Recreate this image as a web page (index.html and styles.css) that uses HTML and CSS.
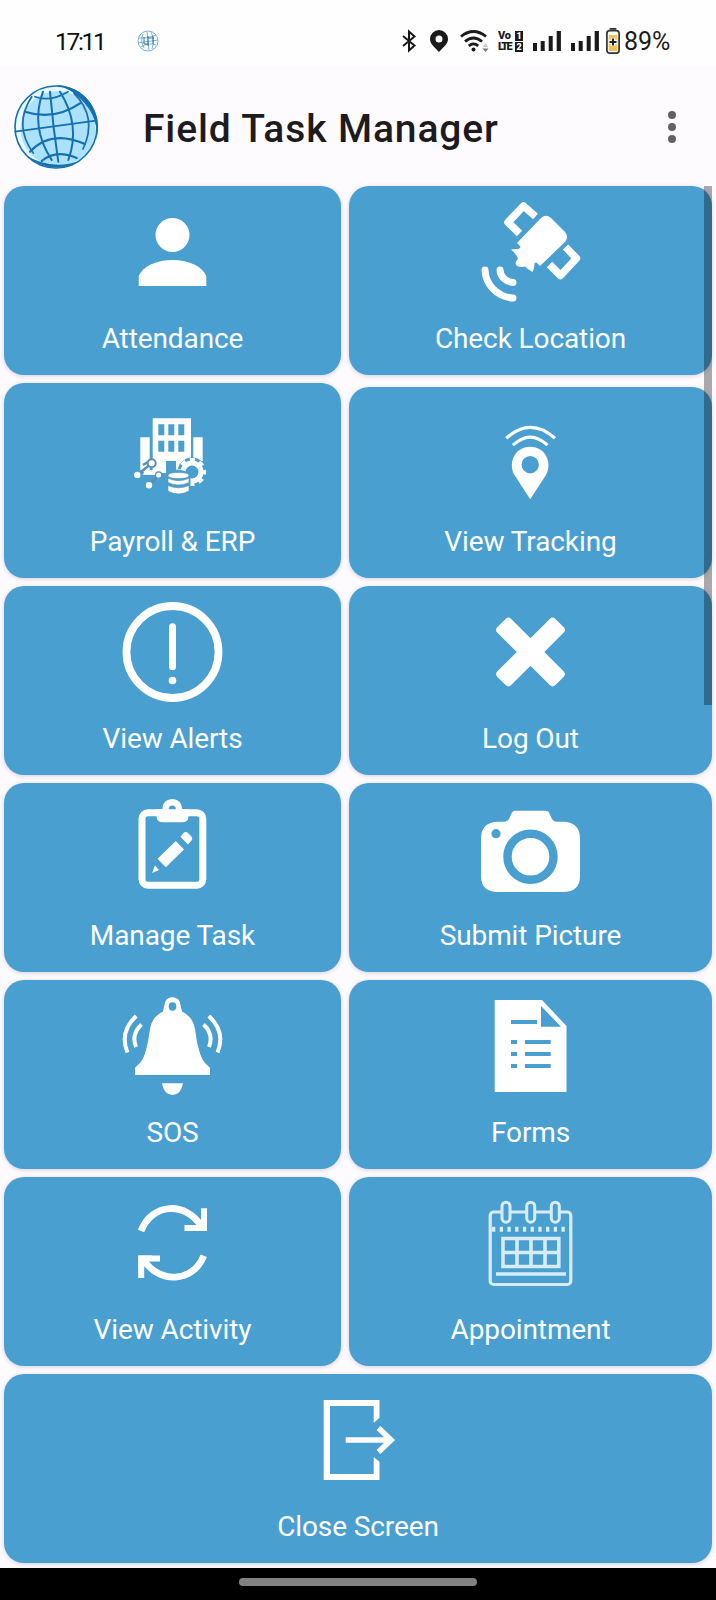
FILE: index.html
```html
<!DOCTYPE html>
<html lang="en">
<head>
  <meta charset="UTF-8" />
  <meta name="viewport" content="width=device-width, initial-scale=1.0"/>
  <title>Field Task Manager</title>
  <link rel="stylesheet" href="styles.css">
</head>
<body>

  <div class="status-bar">
    <span class="clock">17:11</span>
    <svg class="mini-globe" viewBox="0 0 22 22">
      <circle cx="11" cy="11" r="10" />
      <path d="M2 8 Q10 9 19 5 M1 13 L21 10 M4 17 Q11 12 19 15 M6 4 Q3 11 7 18 M10 2 L12 20 M14 2 Q18 10 15 19" />
      <path class="dark" d="M7 7 V14 H11 M11 6 V16 M11 8 H17 M16 6 V14" />
    </svg>
    <div class="status-icons">
      <svg class="bluetooth" viewBox="0 0 14 22"><path d="M1 6 L12.500 15.500 L7 20.500 V1.500 L12.500 6.500 L1 16" /></svg>
      <svg class="place" viewBox="0 0 18 22"><path fill-rule="evenodd" d="M9 0 A9 9 0 0 1 18 9 C18 14 13.500 17 9 22 C4.500 17 0 14 0 9 A9 9 0 0 1 9 0Z M9 5.500 A3.500 3.500 0 1 0 9 12.500 A3.500 3.500 0 1 0 9 5.500Z" /></svg>
      <svg class="wifi" viewBox="0 0 29 22">
        <path class="arc" d="M1 6.500 Q13.500 -3.500 26 6.500 M5 11.500 Q13.500 4.500 22 11.500 M8.800 15.800 Q13.500 12 18.200 15.800" />
        <circle cx="13.500" cy="19.500" r="2" />
        <path class="up" d="M22.500 17 L25.500 13 L28.500 17Z" />
        <path class="down" d="M22.500 18.500 H28.500 L25.500 22Z" />
      </svg>
      <div class="volte">
        <span class="vo">Vo</span><b>1</b>
        <span>LTE</span><b>2</b>
      </div>
      <svg class="signal" viewBox="0 0 28 20"><path d="M0 12 H4 V20 H0Z M7.700 10 H11.700 V20 H7.700Z M15.700 5 H19.700 V20 H15.700Z M23.700 0 H27.900 V20 H23.700Z" /></svg>
      <svg class="signal" viewBox="0 0 28 20"><path d="M0 12 H4 V20 H0Z M7.700 10 H11.700 V20 H7.700Z M15.700 5 H19.700 V20 H15.700Z M23.700 0 H27.900 V20 H23.700Z" /></svg>
      <svg class="battery" viewBox="0 0 14 26">
        <rect x="3.500" y="0" width="7" height="1.800" rx=".8" fill="#333" />
        <rect x=".9" y="2.600" width="12.200" height="22.500" rx="2.800" fill="#fff" stroke="#333" stroke-width="1.700" />
        <rect x="2.700" y="7" width="8.600" height="16" rx="1" fill="#f6c251" />
        <path d="M7 10 V18 M3.200 14 H10.800" fill="none" stroke="#fff" stroke-width="4.500" />
        <path d="M7 10.500 V17.500 M3.500 14 H10.500" fill="none" stroke="#222" stroke-width="2" />
      </svg>
      <span class="percent">89%</span>
    </div>
  </div>

  <div class="app-bar">
    <svg class="logo" viewBox="0 0 84 84">
      <circle cx="42" cy="42" r="41" fill="#e8f9ff" />
      <circle cx="44" cy="43.500" r="37.500" fill="#abe1fa" />
      <circle cx="42" cy="42" r="41" fill="none" stroke="#1470ae" stroke-width="1.600" />
      <path fill="#1470ae" d="M42 0 A42 42 0 0 1 82 55 Q86 28 59 7.500 Q52 2.500 42 0Z M10 69 Q36 92 66 76 Q36 86 10 69Z" />
      <g fill="none" stroke="#1470ae" stroke-width="1.700" stroke-linecap="round">
        <path d="M21 11.700 Q36 17.500 54 6.700 M1 46.700 L82 35.700" />
        <path stroke-width="2.200" d="M11 26.700 Q40 36 66 18.300 M16 66.700 Q37 44 71 59 M27.700 76 Q42 64 62.700 73" />
        <path stroke-width="2" d="M36 6.700 Q39 42 44.300 76.700 M29 6.700 Q16 42 37.700 75 M46 6.700 Q67 40 54.300 75" />
        <path d="M17.700 11.700 Q-1 40 19.300 68 M60 8.300 Q84 32 69 64" />
      </g>
    </svg>
    <h1>Field Task Manager</h1>
    <svg class="more" viewBox="0 0 8 32"><circle cx="4" cy="4" r="4" /><circle cx="4" cy="16" r="4" /><circle cx="4" cy="28" r="4" /></svg>
  </div>

  <div class="menu">
    <div class="card">
      <svg class="icon" viewBox="0 0 100 100">
        <circle cx="49.500" cy="33" r="17" />
        <path d="M15.700 84 V74 C20 64 34 58 49.500 58 S79 64 83.300 74 V84Z" />
      </svg>
      <span>Attendance</span>
    </div>

    <div class="card">
      <svg class="icon" viewBox="0 0 100 100">
        <path d="M36 41 L60 16 Q65 11.500 70 16 L84 30 Q88 35 84 40 L59 64Z" />
        <path d="M30 47.500 Q36 46.500 42 48 L53 58.500 Q54.500 64 51.500 70 L46 66.500 L44 64.500 Q39 66 35.500 63.500 Q33 60 37 57 Q35 51 30 47.500Z" />
        <path d="M36 50 L40 44 L56 60 L50 63Z" />
        <g class="line" stroke-width="7.500">
          <path stroke-linejoin="round" d="M38.500 31.500 L27 20.300 L42.500 4 L54.500 14.500" />
          <path stroke-linejoin="round" d="M84.500 45 L95.500 56.300 L79.500 73.500 L68.500 62.500" />
          <path stroke-width="7" stroke-linecap="round" d="M4 68 A30 29 0 0 0 32 96 M19 68 A14 13 0 0 0 32 80.500" />
        </g>
      </svg>
      <span>Check Location</span>
    </div>

    <div class="card tall">
      <svg class="icon" viewBox="0 0 100 100">
        <path fill-rule="evenodd" d="M29.700 13.300 H68 V68 H53 V56 H43 V68 H29.700Z M35.300 19.300 V30.300 H41.300 V19.300Z M45.300 19.300 V30.300 H51.300 V19.300Z M55.300 19.300 V30.300 H61.300 V19.300Z M35.300 35.700 V46.700 H41.300 V35.700Z M45.300 35.700 V46.700 H51.300 V35.700Z M55.300 35.700 V46.700 H61.300 V35.700Z" />
        <path d="M17.300 32.300 H26.700 V68 H22 L17.300 65Z M70.300 32.300 H79.700 V56 H70.300Z M22 65 H36 V70 H20Z" />
        <g fill="none" stroke="#5b8fae" stroke-width="2.600">
          <path d="M14.300 70 L28.700 58.300 M26 80 L35.700 70 M20 60 L25 57" />
        </g>
        <circle cx="28.700" cy="58.300" r="4" stroke="#5b8fae" stroke-width="2" />
        <circle cx="35.700" cy="70" r="3.200" stroke="#5b8fae" stroke-width="1.300" />
        <circle cx="14.300" cy="70" r="3.200" />
        <circle cx="26" cy="80.200" r="3.200" />
        <circle cx="69" cy="67" r="14.500" fill="#499fcf" />
        <circle class="line" cx="69" cy="67" r="9" stroke-width="5" />
        <circle class="line" cx="69" cy="67" r="12.300" stroke-width="3.600" stroke-dasharray="5 4.660" stroke-dashoffset="2.500" />
        <path fill="#499fcf" d="M43 68 Q55 61 67.500 69 V90 H43Z" />
        <path stroke="#5b8fae" stroke-width=".6" d="M45 70.500 Q45 67.500 55.500 67.500 T66 70.500 T55.500 73.500 T45 70.500Z M45 73.300 Q55.500 78 66 73.300 V77.500 Q55.500 82.500 45 77.500Z M45 80.500 Q55.500 85 66 80.500 V86 Q55.500 92 45 86Z" />
      </svg>
      <span>Payroll &amp; ERP</span>
    </div>

    <div class="card lowered">
      <svg class="icon" viewBox="0 0 100 100">
        <path fill-rule="evenodd" d="M49.200 94.300 L33.500 70 C27 59 33 41.700 49.200 41.700 S71.500 59 65 70Z M49.200 51 A8.700 8.700 0 1 0 49.200 68.400 A8.700 8.700 0 1 0 49.200 51Z" />
        <path class="line" stroke-width="3.200" d="M25.200 33.300 Q49.200 11.500 74 33.300 M32 40.200 Q49.200 24 66.500 40.200" />
      </svg>
      <span>View Tracking</span>
    </div>

    <div class="card">
      <svg class="icon" viewBox="0 0 100 100">
        <circle class="line" cx="49.500" cy="50" r="46" stroke-width="7.800" />
        <rect x="46" y="21.300" width="7" height="47" rx="3.500" />
        <circle cx="49.500" cy="78.500" r="3.800" />
      </svg>
      <span>View Alerts</span>
    </div>

    <div class="card">
      <svg class="icon" viewBox="0 0 100 100">
        <rect x="8.500" y="40.200" width="82" height="19.600" rx="4" transform="rotate(45 49.500 50)" />
        <rect x="8.500" y="40.200" width="82" height="19.600" rx="4" transform="rotate(-45 49.500 50)" />
      </svg>
      <span>Log Out</span>
    </div>

    <div class="card">
      <svg class="icon" viewBox="0 0 100 100">
        <rect class="line" x="19" y="13.700" width="60.800" height="72.500" rx="6" stroke-width="7" />
        <path fill-rule="evenodd" d="M33.500 10 H39.500 C39 -3.500 59.500 -3.500 59 10 H65.500 V17 Q65.500 23.300 59 23.300 H40 Q33.500 23.300 33.500 17Z M49.300 6.600 A3.600 3.600 0 1 0 49.300 13.800 A3.600 3.600 0 1 0 49.300 6.600Z" />
        <path d="M52.800 42 L61 50.500 L42.800 68.300 L34.500 59.700Z M57.400 37.700 L60.500 34 Q63 32 65.500 34.500 L68 37 Q70.500 40 68 42 L65 45.500Z M32 66.500 L36 71 L29 74Z" />
      </svg>
      <span>Manage Task</span>
    </div>

    <div class="card">
      <svg class="icon" viewBox="0 0 100 100">
        <path d="M17 22.700 H23 Q27 22.700 28.500 19 L31 13.500 Q32 11.700 34 11.700 H65 Q67 11.700 68 13.500 L70.500 19 Q72 22.700 76 22.700 H82 Q99 23 99 40 V77 Q99 93 82 93 H17 Q0 93 0 77 V40 Q0 23 17 22.700Z" />
        <circle cx="49.500" cy="57.700" r="23" fill="none" stroke="#499fcf" stroke-width="8.400" />
        <circle cx="15" cy="34.700" r="4.600" fill="#499fcf" />
      </svg>
      <span>Submit Picture</span>
    </div>

    <div class="card">
      <svg class="icon" viewBox="0 0 100 100">
        <path fill-rule="evenodd" d="M49.500 1.300 C55 1.300 57 5 57.500 9 L59 15.500 C66 19 70 24 71.500 31 C73 37 73 42 75 50 C78 62 80 66 87 71.700 V79 H12 V71.700 C19 66 21 62 24 50 C26 42 26 37 27.500 31 C29 24 33 19 40 15.500 L41.500 9 C42 5 44 1.300 49.500 1.300Z M49.500 6.300 A3.800 4.200 0 1 0 49.500 14.700 A3.800 4.200 0 1 0 49.500 6.300Z" />
        <path d="M39 87.300 H60 Q58 99 49.500 99 T39 87.300Z" />
        <path class="line" stroke-width="4" d="M13.200 20 Q-4 36 4.500 56.500 M18.500 28.500 Q8 38 13 51 M85.800 20 Q103 36 94.500 56.500 M80.500 28.500 Q91 38 86 51" />
      </svg>
      <span>SOS</span>
    </div>

    <div class="card">
      <svg class="icon" viewBox="0 0 100 100">
        <path d="M13.700 4 H61 L85.500 30 V96 H13.700Z" />
        <path fill="#499fcf" d="M60 10 V30.700 H80Z M30 24 H56 V28 H30Z M30 44 H36 V48 H30Z M44 44 H69.700 V48 H44Z M30 56 H36 V60 H30Z M44 56 H69.700 V60 H44Z M30 68 H36 V72 H30Z M44 68 H69.700 V72 H44Z" />
      </svg>
      <span>Forms</span>
    </div>

    <div class="card">
      <svg class="icon" viewBox="0 0 100 100">
        <g class="line" stroke-width="6.800">
          <path d="M18 38 C29 9.500 63 8 79 34 M80.800 62.700 C70 90 36 91.500 20 66" />
          <path stroke-width="6" d="M61.500 35 H81 V15.300 M37 65.500 H18.200 V85" />
        </g>
        <path d="M70 38 L84 22 V38Z M29 62.500 L15.500 78 V62.500Z" />
      </svg>
      <span>View Activity</span>
    </div>

    <div class="card">
      <svg class="icon calendar" viewBox="0 0 100 100">
        <rect x="9.200" y="19" width="80.600" height="72.500" rx="3.500" stroke-width="3.200" />
        <g fill="#499fcf" stroke-width="3">
          <rect x="21" y="9.200" width="8" height="20" rx="4" />
          <rect x="45.700" y="9.200" width="8" height="20" rx="4" />
          <rect x="70.300" y="9.200" width="8" height="20" rx="4" />
        </g>
        <path stroke-width="5" stroke-dasharray="3.300 4.420" d="M11 36.300 H89.500" />
        <path stroke-width="3.600" d="M22 45.500 H77.800 V73.500 H22Z M22 59.500 H77.800 M36 45.500 V73.500 M50 45.500 V73.500 M64 45.500 V73.500 M15 81 H85" />
      </svg>
      <span>Appointment</span>
    </div>

    <div class="card wide">
      <svg class="icon" viewBox="0 0 100 100">
        <path d="M15.700 10 H71.500 V27.700 L65.700 33 V16 H22 V84 H65.700 V67 L71.500 71.700 V90 H15.700Z" />
        <path class="line" stroke-width="5.600" d="M37.700 50 H83 M70.500 38 L83 50 L70.500 62" />
      </svg>
      <span>Close Screen</span>
    </div>

    <div class="scrollbar"></div>
  </div>

  <div class="nav-bar"><div class="nav-handle"></div></div>

</body>
</html>
```

FILE: styles.css
```css
:root {
  --bg: #fefbff;
  --card: #499fcf;
  --text: #1d1b20;
}
* {
  box-sizing: border-box;
}
body {
  margin: 0;
  width: 716px;
  height: 1600px;
  overflow: hidden;
  font-family: Roboto, "Liberation Sans", sans-serif;
  background: var(--bg);
  color: var(--text);
  display: flex;
  flex-direction: column;
}
svg {
  display: block;
  flex: none;
  overflow: visible;
}

/* status bar */
.status-bar {
  height: 66px;
  padding: 16px 42px 0 55px;
  display: flex;
  align-items: center;
  background: #fefefe;
}
.clock {
  width: 82px;
  padding-top: 1px;
  font-size: 24.5px;
  letter-spacing: -2.3px;
  line-height: 50px;
  color: #111;
}
.mini-globe {
  width: 22px;
  height: 22px;
  fill: none;
  stroke: #5ba3cc;
  stroke-width: 0.8;
}
.mini-globe .dark {
  stroke: #155f86;
}
.status-icons {
  margin-left: auto;
  display: flex;
  align-items: center;
  fill: #1a1a1a;
}
.bluetooth {
  width: 14px;
  height: 22px;
  fill: none;
  stroke: #1a1a1a;
  stroke-width: 2;
}
.place {
  width: 18px;
  height: 22px;
  margin-left: 14px;
}
.wifi {
  width: 29px;
  height: 22px;
  margin-left: 12px;
}
.wifi .arc {
  fill: none;
  stroke: #1a1a1a;
  stroke-width: 2.8;
}
.wifi .up {
  fill: #ccc;
}
.wifi .down {
  fill: #777;
}
.volte {
  width: 25px;
  height: 21px;
  margin-left: 9px;
  display: grid;
  grid-template-columns: 16px 8px;
  grid-template-rows: 10px 10px;
  gap: 1px;
  font-size: 11px;
  line-height: 10px;
  font-weight: 900;
  color: #1a1a1a;
}
.volte span {
  letter-spacing: -1.6px;
}
.volte .vo {
  letter-spacing: -0.2px;
}
.volte b {
  background: #1a1a1a;
  color: #fff;
  font-size: 9px;
  text-align: center;
}
.signal {
  width: 28px;
  height: 20px;
  margin-left: 10px;
}
.battery {
  width: 14px;
  height: 26px;
  margin-left: 7px;
}
.percent {
  width: 50px;
  margin-left: 4px;
  padding-top: 1px;
  font-size: 25px;
  letter-spacing: -0.1px;
  white-space: nowrap;
}

/* title bar */
.app-bar {
  height: 120px;
  padding: 1px 40px 0 14px;
  display: flex;
  align-items: center;
}
.logo {
  width: 84px;
  height: 84px;
}
h1 {
  margin: 4px 0 0 45px;
  font-size: 39px;
  line-height: 46px;
  font-weight: 500;
  letter-spacing: 0.87px;
  white-space: nowrap;
}
.more {
  width: 8px;
  height: 32px;
  margin-left: auto;
  fill: #646267;
}

/* menu cards */
.menu {
  position: relative;
  height: 1382px;
  padding: 0 4px;
  display: grid;
  grid-template-columns: 337px 363px;
  grid-template-rows: 189px 195px;
  grid-auto-rows: 189px;
  gap: 8px;
  flex: none;
}
.card {
  display: flex;
  flex-direction: column;
  align-items: center;
  justify-content: flex-end;
  padding-bottom: 20px;
  border-radius: 20px;
  background: var(--card);
  box-shadow: 0 1px 4px rgba(60, 50, 90, 0.22);
  color: #fff;
}
.card span {
  margin-top: 20px;
  font-size: 28px;
  line-height: 33px;
  letter-spacing: -0.1px;
  white-space: nowrap;
}
.lowered {
  margin-top: 4px;
}
.wide {
  grid-column: 1 / 3;
}
.icon {
  width: 100px;
  height: 100px;
  fill: #fff;
}
.line {
  fill: none;
  stroke: #fff;
}
.calendar {
  fill: none;
  stroke: #d8ecf8;
}
.scrollbar {
  position: absolute;
  top: 0;
  right: 4px;
  width: 8px;
  height: 519px;
  background: rgba(0, 0, 0, 0.33);
}

/* gesture bar */
.nav-bar {
  height: 32px;
  display: flex;
  align-items: center;
  justify-content: center;
  padding-bottom: 4px;
  background: #000;
}
.nav-handle {
  width: 238px;
  height: 8px;
  border-radius: 4px;
  background: #828282;
}
```
